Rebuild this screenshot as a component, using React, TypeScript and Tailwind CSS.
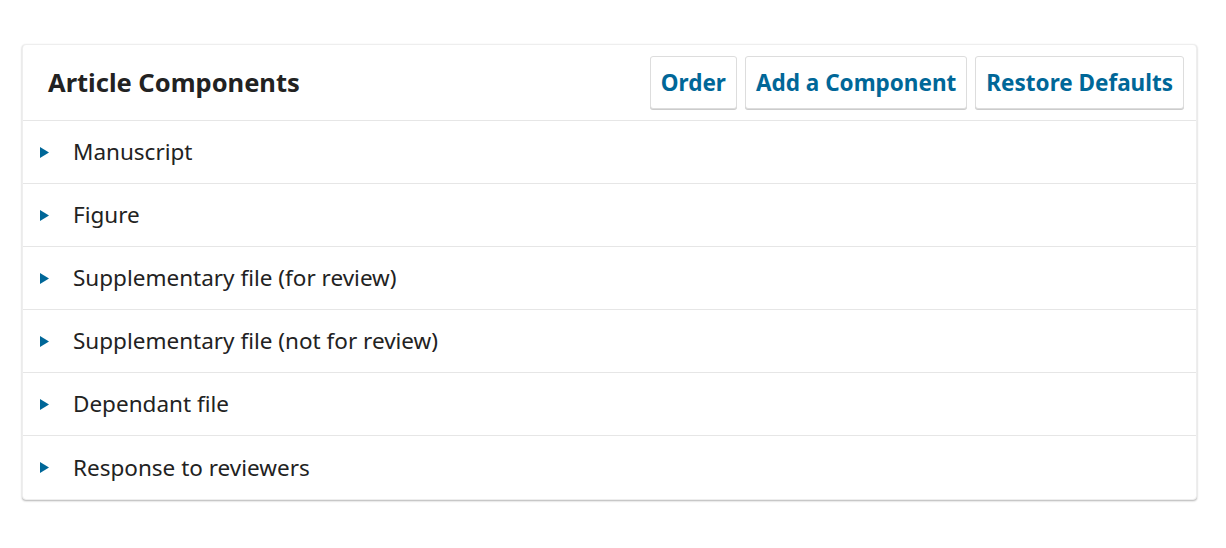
const items = [
  "Manuscript",
  "Figure",
  "Supplementary file (for review)",
  "Supplementary file (not for review)",
  "Dependant file",
  "Response to reviewers",
]

function Caret() {
  return (
    <svg width="9" height="11" viewBox="0 0 9 11" className="shrink-0">
      <polygon points="0,0 9,5.5 0,11" fill="#006798" />
    </svg>
  )
}

export default function App() {
  return (
    <div className="min-h-[548px] bg-white pt-[44px] px-[22px] font-['Noto_Sans',sans-serif] text-[#222]">
      <div className="w-[1175px] rounded-[4px] border border-[#eee] bg-white shadow-[0_1px_2px_rgba(0,0,0,0.3)]">
        <div className="flex h-[76px] items-center justify-between border-b border-[#e6e6e6] pl-[25px] pr-[12px]">
          <h2 className="text-[25.5px] font-bold leading-none">Article Components</h2>
          <div className="flex gap-[8px]">
            {["Order", "Add a Component", "Restore Defaults"].map((b) => (
              <button
                key={b}
                className="h-[53px] rounded-[3px] border border-[#ddd] bg-white px-[10px] text-[22.5px] font-bold text-[#006798] shadow-[0_1px_0_#ccc]"
              >
                {b}
              </button>
            ))}
          </div>
        </div>
        {items.map((t, i) => (
          <div
            key={t}
            className={`flex h-[63px] items-center gap-[24px] pl-[17px] ${i < items.length - 1 ? "border-b border-[#e6e6e6]" : ""}`}
          >
            <Caret />
            <span className="text-[22.5px]">{t}</span>
          </div>
        ))}
      </div>
    </div>
  )
}
